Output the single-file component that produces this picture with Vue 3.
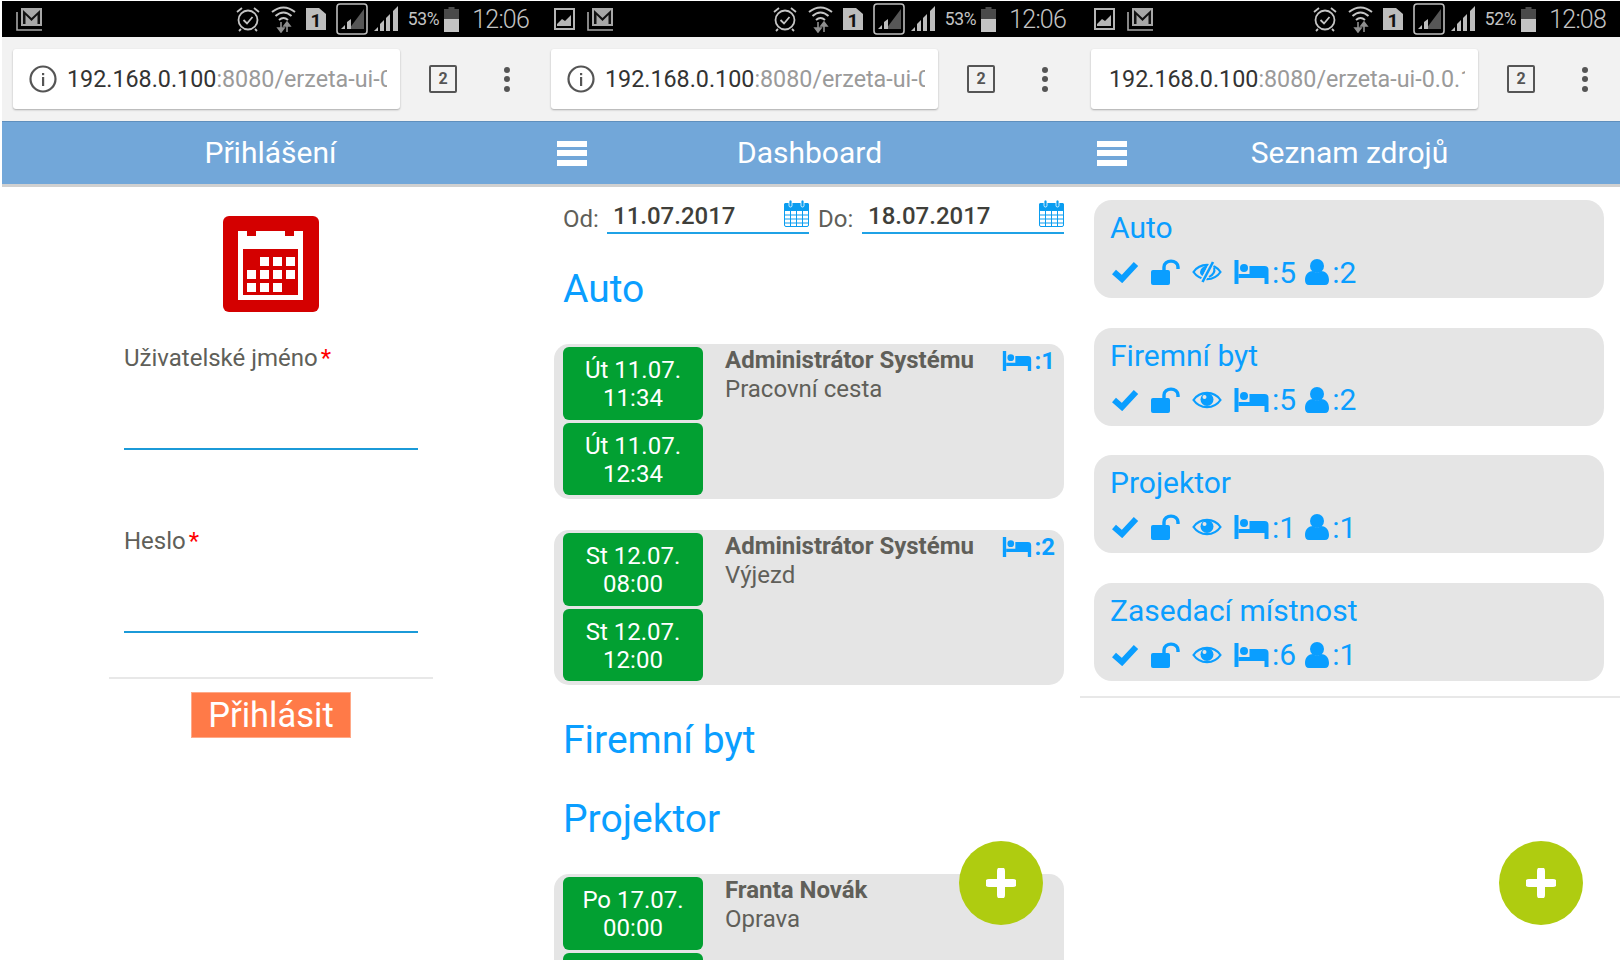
<template>
  <div class="screens">
    <svg class="defs" width="0" height="0">
      <symbol id="check" viewBox="0 0 28 22">
        <path d="M3 11 L11 18 L25 3" fill="none" stroke="currentColor" stroke-width="6" />
      </symbol>
      <symbol id="unlock" viewBox="0 0 29 26">
        <rect x="0" y="11" width="19" height="15" rx="2" fill="currentColor" />
        <path d="M13 12 V8 a6.5 5.5 0 0 1 14 0 V10" fill="none" stroke="currentColor" stroke-width="3.4" />
      </symbol>
      <symbol id="eye" viewBox="0 0 30 22">
        <path d="M1.5 11 C8 1.5 22 1.5 28.5 11 C22 20.5 8 20.5 1.5 11 Z" fill="none" stroke="currentColor" stroke-width="2.2" />
        <circle cx="15" cy="10.5" r="6.5" fill="currentColor" />
        <circle cx="12.5" cy="8" r="2" fill="#e5e5e5" />
      </symbol>
      <symbol id="eye-off" viewBox="0 0 30 22">
        <path d="M1.5 11 C8 1.5 22 1.5 28.5 11 C22 20.5 8 20.5 1.5 11 Z" fill="none" stroke="currentColor" stroke-width="2.2" />
        <path d="M8 11 Q9 5 16 4.5 L11 15 Q8 14 8 11 Z" fill="currentColor" />
        <path d="M22 7 Q24 12 17 16" fill="none" stroke="currentColor" stroke-width="2" />
        <path d="M21 0.5 L10 21.5" stroke="#e5e5e5" stroke-width="5" />
        <path d="M21 1 L10.5 21" stroke="currentColor" stroke-width="2.6" />
      </symbol>
      <symbol id="bed" viewBox="0 0 34 24">
        <rect x="0" y="0" width="4" height="24" fill="currentColor" />
        <circle cx="9.5" cy="8" r="4" fill="currentColor" />
        <path d="M15 6 H30 a4 4 0 0 1 4 4 V24 h-4 V18 H4 V14 H15 Z" fill="currentColor" />
      </symbol>
      <symbol id="user" viewBox="0 0 24 26">
        <circle cx="12" cy="7" r="7" fill="currentColor" />
        <path d="M0 21 C0 15 4 12 8 12 Q12 15.5 16 12 C20 12 24 15 24 21 Q24 26 20 26 H4 Q0 26 0 21 Z" fill="currentColor" />
      </symbol>
      <symbol id="calendar" viewBox="0 0 25 27">
        <rect x="0.5" y="3.5" width="24" height="23" rx="1.5" fill="#fff" stroke="currentColor" />
        <rect x="0" y="3" width="25" height="8" rx="1.5" fill="currentColor" />
        <rect x="5" y="0" width="3" height="7" rx="1.5" fill="currentColor" stroke="#fff" stroke-width="0.8" />
        <rect x="17" y="0" width="3" height="7" rx="1.5" fill="currentColor" stroke="#fff" stroke-width="0.8" />
        <path d="M6.5 11 V26 M12.5 11 V26 M18.5 11 V26 M1 15 H24 M1 19 H24 M1 23 H24" stroke="currentColor" stroke-width="1" />
      </symbol>
    </svg>

    <section v-for="phone in phones" :key="phone.id" class="phone" :class="phone.id">
      <div class="status">
        <svg v-if="phone.id !== 'login'" class="st-picture" viewBox="0 0 21 22" width="21" height="22">
          <rect x="1" y="1" width="19" height="20" fill="none" stroke="#b5b5b5" stroke-width="2" />
          <path d="M3 16 L8 11 L11 13 L17 7 V18 H3 Z" fill="#b5b5b5" />
        </svg>
        <svg class="st-mail" viewBox="0 0 27 24" width="27" height="24">
          <path d="M1 5 V23 H26" fill="none" stroke="#a8a8a8" stroke-width="1.6" />
          <rect x="5" y="1" width="21" height="18" fill="#a8a8a8" />
          <path d="M7 3 L15.5 11 L24 3 V17 H21.5 V8 L15.5 14 L9.5 8 V17 H7 Z" fill="#111" />
        </svg>
        <div class="st-right">
          <svg viewBox="0 0 24 26" width="24" height="26">
            <circle cx="12" cy="14" r="9.5" fill="none" stroke="#c4c4c4" stroke-width="1.8" />
            <path d="M7.5 14 L11 17.5 L16.5 11" fill="none" stroke="#c4c4c4" stroke-width="1.8" />
            <path d="M1 6 L6 2 M23 6 L18 2 M5 23 L3 25 M19 23 L21 25" stroke="#c4c4c4" stroke-width="1.8" />
          </svg>
          <svg class="gap-11" viewBox="0 0 25 28" width="25" height="28">
            <path d="M1 7 Q12.5 -2 24 7 M4.5 11 Q12.5 4 20.5 11 M8 15 Q12.5 11 17 15" fill="none" stroke="#c4c4c4" stroke-width="2" />
            <path d="M10 17 V26 M7 23 L10 27 L13 23 Z M16 18 V27 M13 21 L16 17 L19 21 Z" stroke="#8f8f8f" fill="#8f8f8f" stroke-width="1.6" />
          </svg>
          <svg class="gap-10" viewBox="0 0 20 22" width="20" height="22">
            <path d="M0 0 H13 L20 6 V22 H0 Z" fill="#bdbdbd" />
            <text x="4.5" y="19" class="sim-num">1</text>
          </svg>
          <svg class="gap-10" viewBox="0 0 32 32" width="32" height="32">
            <rect x="1" y="1" width="30" height="30" rx="3" fill="#000" stroke="#bdbdbd" stroke-width="1.6" />
            <path d="M13 26 L28 6 V26 Z" fill="#565656" />
            <path d="M5 26 L9 22 V26 Z M11 26 V19 L15 16 V26 Z" fill="#bdbdbd" />
          </svg>
          <svg class="gap-5" viewBox="0 0 26 26" width="26" height="26">
            <path d="M1 25 L5 21 V25 Z M7 25 V18 L11 14 V25 Z M13 25 V12 L17 8 V25 Z M20 25 V5 L25 0 V25 Z" fill="#bdbdbd" />
          </svg>
          <span class="st-pct">{{ phone.battery }}</span>
          <svg class="gap-5" viewBox="0 0 15 25" width="15" height="25">
            <path d="M4.5 0 H10.5 V2 H15 V25 H0 V2 H4.5 Z" fill="#4a4a4a" />
            <path d="M0 12 H15 V25 H0 Z" fill="#c4c4c4" />
          </svg>
          <span class="st-time">{{ phone.time }}</span>
        </div>
      </div>

      <div class="chrome">
        <div class="url">
          <svg v-if="phone.secureIcon" class="info" viewBox="0 0 28 28" width="28" height="28">
            <circle cx="14" cy="14" r="12.5" fill="none" stroke="#555" stroke-width="2.2" />
            <rect x="13" y="12" width="2.2" height="9" fill="#555" />
            <rect x="13" y="8" width="2.2" height="2.2" fill="#555" />
          </svg>
          <span class="url-text" :class="{ plain: !phone.secureIcon }"><span class="host">192.168.0.100</span>:8080/erzeta-ui-0.0.1-SNAPSHOT</span>
        </div>
        <div class="tabs">2</div>
        <div class="dots"><i></i><i></i><i></i></div>
      </div>

      <header class="bar">
        <div class="bar-left">
          <div v-if="phone.id !== 'login'" class="burger"><i></i><i></i><i></i></div>
        </div>
        <h1>{{ phone.title }}</h1>
        <div></div>
      </header>

      <main v-if="phone.id === 'login'" class="login">
        <svg class="logo" viewBox="0 0 96 96" width="96" height="96">
          <rect width="96" height="96" rx="6" fill="#d40000" />
          <path d="M15 15 H24 V20 H33 V15 H62 V20 H71 V15 H80 V84 H15 Z" fill="#fff" />
          <rect x="20" y="33" width="55" height="46" fill="#d40000" />
          <rect v-for="c in logoCells" :key="c.join()" :x="c[0]" :y="c[1]" width="9" height="9" fill="#fff" />
        </svg>
        <form class="form" @submit.prevent>
          <div class="form-fields">
            <label>Uživatelské jméno<b>*</b></label>
            <div class="line"></div>
            <label class="second">Heslo<b>*</b></label>
            <div class="line"></div>
          </div>
          <div class="form-foot">
            <button type="button">Přihlásit</button>
          </div>
        </form>
      </main>

      <main v-else-if="phone.id === 'dashboard'" class="dash">
        <div class="range">
          <template v-for="d in dates" :key="d.label">
            <span class="range-label">{{ d.label }}</span>
            <div class="range-field">
              <span>{{ d.value }}</span>
              <svg class="blue" width="25" height="27"><use href="#calendar" /></svg>
            </div>
          </template>
        </div>
        <template v-for="group in groups" :key="group.name">
          <h2>{{ group.name }}</h2>
          <article v-for="ev in group.events" :key="ev.from" class="event">
            <div class="times">
              <div class="time">{{ ev.from }}<br />{{ ev.fromTime }}</div>
              <div class="time">{{ ev.to }}<br />{{ ev.toTime }}</div>
            </div>
            <div class="info-col">
              <strong>{{ ev.who }}</strong>
              <span>{{ ev.what }}</span>
            </div>
            <div v-if="ev.beds" class="beds">
              <svg width="30" height="20"><use href="#bed" /></svg>:{{ ev.beds }}
            </div>
          </article>
        </template>
      </main>

      <main v-else class="list">
        <article v-for="res in resources" :key="res.name" class="res">
          <h3>{{ res.name }}</h3>
          <div class="res-row">
            <svg width="28" height="22"><use href="#check" /></svg>
            <svg width="29" height="26"><use href="#unlock" /></svg>
            <svg width="30" height="22"><use :href="res.hidden ? '#eye-off' : '#eye'" /></svg>
            <span class="stat">
              <svg width="35" height="24"><use href="#bed" /></svg>:{{ res.beds }}
            </span>
            <span class="stat">
              <svg width="24" height="26"><use href="#user" /></svg>:{{ res.people }}
            </span>
          </div>
        </article>
        <hr />
      </main>

      <button v-if="phone.id !== 'login'" class="fab" type="button">
        <svg viewBox="0 0 30 30" width="30" height="30">
          <path d="M15 3 V27 M3 15 H27" stroke="#fff" stroke-width="8" stroke-linecap="round" />
        </svg>
      </button>
    </section>
  </div>
</template>

<script setup>
const phones = [
  { id: 'login', title: 'Přihlášení', battery: '53%', time: '12:06', secureIcon: true },
  { id: 'dashboard', title: 'Dashboard', battery: '53%', time: '12:06', secureIcon: true },
  { id: 'list', title: 'Seznam zdrojů', battery: '52%', time: '12:08', secureIcon: false }
]

const logoCells = [
  [37, 41], [50, 41], [63, 41],
  [24, 54], [37, 54], [50, 54], [63, 54],
  [24, 67], [37, 67], [50, 67]
]

const dates = [
  { label: 'Od:', value: '11.07.2017' },
  { label: 'Do:', value: '18.07.2017' }
]

const groups = [
  {
    name: 'Auto',
    events: [
      { from: 'Út 11.07.', fromTime: '11:34', to: 'Út 11.07.', toTime: '12:34', who: 'Administrátor Systému', what: 'Pracovní cesta', beds: 1 },
      { from: 'St 12.07.', fromTime: '08:00', to: 'St 12.07.', toTime: '12:00', who: 'Administrátor Systému', what: 'Výjezd', beds: 2 }
    ]
  },
  { name: 'Firemní byt', events: [] },
  {
    name: 'Projektor',
    events: [
      { from: 'Po 17.07.', fromTime: '00:00', to: 'Po 17.07.', toTime: '12:00', who: 'Franta Novák', what: 'Oprava', beds: 0 }
    ]
  }
]

const resources = [
  { name: 'Auto', hidden: true, beds: 5, people: 2 },
  { name: 'Firemní byt', hidden: false, beds: 5, people: 2 },
  { name: 'Projektor', hidden: false, beds: 1, people: 1 },
  { name: 'Zasedací místnost', hidden: false, beds: 6, people: 1 }
]
</script>

<style>
html, body {
  margin: 0;
  background: #fff;
}
</style>

<style scoped>
.screens {
  display: grid;
  grid-template-columns: 538px 540px 540px;
  margin-left: 2px;
  height: 960px;
  overflow: hidden;
  font-family: Roboto, "Liberation Sans", sans-serif;
  color: #605f59;
}
.defs {
  position: absolute;
}
.phone {
  position: relative;
  height: 960px;
  overflow: hidden;
}

.status {
  display: flex;
  align-items: center;
  gap: 12px;
  height: 36px;
  margin-top: 1px;
  padding: 0 14px 0 14px;
  background: #000;
  color: #c4c4c4;
}
.phone.login .status {
  padding-right: 11px;
}
.st-right {
  display: flex;
  align-items: center;
  margin-left: auto;
}
.gap-11 { margin-left: 11px; }
.gap-10 { margin-left: 10px; }
.gap-5 { margin-left: 5px; }
.sim-num {
  font: 700 19px Roboto, sans-serif;
  fill: #111;
}
.st-pct {
  margin-left: 9px;
  font-size: 17.5px;
  letter-spacing: -0.3px;
}
.st-time {
  margin-left: 13px;
  font-size: 25px;
  font-weight: 300;
  letter-spacing: -0.8px;
}

.chrome {
  display: flex;
  align-items: center;
  height: 84px;
  background: #f2f2f2;
  padding: 0 22px 0 11px;
}
.url {
  display: flex;
  align-items: center;
  width: 387px;
  height: 60px;
  box-sizing: border-box;
  padding: 0 13px 0 16px;
  background: #fff;
  border-radius: 3px;
  box-shadow: 0 1px 2px rgba(0, 0, 0, 0.3);
}
.info {
  flex: none;
  margin-right: 10px;
}
.url-text {
  flex: 1;
  overflow: hidden;
  white-space: nowrap;
  font-size: 23.3px;
  color: #9a9a9a;
}
.url-text.plain {
  padding-left: 2px;
}
.host {
  color: #333;
}
.tabs {
  width: 28px;
  height: 28px;
  margin-left: 29px;
  box-sizing: border-box;
  border: 2.5px solid #555;
  border-radius: 2px;
  text-align: center;
  font-size: 16px;
  font-weight: 700;
  line-height: 23px;
  color: #555;
}
.dots {
  display: flex;
  flex-direction: column;
  gap: 3.5px;
  margin-left: 47px;
}
.dots i {
  width: 6px;
  height: 6px;
  border-radius: 50%;
  background: #555;
}

.bar {
  display: grid;
  grid-template-columns: 1fr auto 1fr;
  align-items: center;
  height: 66px;
  box-sizing: border-box;
  background: #72a7d9;
  border-top: 1px solid #5f8fbd;
  border-bottom: 3px solid #d0d0d0;
}
.bar h1 {
  margin: -2px 1px 0 0;
  font-size: 30px;
  font-weight: 400;
  color: #fff;
}
.bar-left {
  padding-left: 17px;
}
.burger {
  display: flex;
  flex-direction: column;
  gap: 3.5px;
  width: 30px;
}
.burger i {
  height: 6px;
  background: #fff;
}

main.login {
  display: flex;
  flex-direction: column;
  align-items: center;
  padding-top: 29px;
}
.form {
  width: 324px;
  margin-top: 31px;
}
.form-fields {
  padding: 0 15px 44px;
  border-bottom: 2px solid #e8e8e8;
}
.form label {
  display: block;
  height: 30px;
  font-size: 24px;
  line-height: 30px;
}
.form label b {
  margin-left: 3px;
  font-weight: 400;
  color: #f00;
}
.form label.second {
  margin-top: 76px;
}
.line {
  margin-top: 75px;
  height: 2px;
  background: #1b9ad8;
}
.form-foot {
  display: flex;
  justify-content: center;
  padding-top: 13px;
}
.form-foot button {
  width: 160px;
  height: 46px;
  padding: 0;
  border: 1px solid #ffa988;
  border-radius: 0;
  background: #ff7a48;
  color: #fff;
  font-family: inherit;
  font-size: 34.5px;
  line-height: 44px;
}

.range {
  display: flex;
  align-items: flex-end;
  margin-top: 13px;
  padding: 0 16px 0 23px;
}
.range-label {
  width: 44px;
  font-size: 24px;
  line-height: 30px;
}
.range-field {
  display: flex;
  align-items: flex-end;
  justify-content: space-between;
  width: 202px;
  height: 34px;
  margin-right: 9px;
  box-sizing: border-box;
  padding-left: 6px;
  border-bottom: 2px solid #1fa2e6;
  font-size: 24px;
  font-weight: 500;
  line-height: 28px;
  color: #3f3f3a;
}
.range-field span {
  margin-bottom: 2px;
}
.range-field:last-child {
  margin-right: 0;
}
.range-field .blue {
  margin-bottom: 5px;
  color: #0a9df0;
}
.dash h2 {
  margin: 31px 0 0 23px;
  font-size: 39px;
  font-weight: 400;
  line-height: 48px;
  color: #0a9eff;
}
.event {
  display: flex;
  margin: 31px 16px 0 14px;
  padding: 3px 9px 4px 9px;
  border-radius: 15px;
  background: #e5e5e5;
}
.times {
  display: flex;
  flex-direction: column;
  gap: 3px;
  flex: none;
}
.time {
  width: 140px;
  height: 72.5px;
  padding-top: 9px;
  box-sizing: border-box;
  border-radius: 6px;
  background: #02a032;
  color: #fff;
  font-size: 24px;
  line-height: 28px;
  text-align: center;
}
.info-col {
  flex: 1;
  display: flex;
  flex-direction: column;
  margin-left: 22px;
  margin-top: -1px;
  font-size: 24px;
  line-height: 29px;
}
.beds {
  display: flex;
  align-items: center;
  gap: 2px;
  height: 29px;
  margin-top: -1px;
  color: #0a9eff;
  font-size: 24px;
  font-weight: 700;
}

main.list {
  padding-top: 13px;
}
.res {
  height: 98px;
  margin: 0 16px 29.5px 14px;
  padding: 10px 0 0 17px;
  box-sizing: border-box;
  border-radius: 18px;
  background: #e5e5e5;
  color: #0a9eff;
}
.res h3 {
  margin: 0 0 0 -1px;
  font-size: 30px;
  font-weight: 400;
  line-height: 36px;
}
.res-row {
  display: flex;
  align-items: center;
  gap: 12px;
  height: 36px;
  margin-top: 8px;
  font-size: 30px;
}
.stat {
  display: flex;
  align-items: center;
  gap: 3px;
}
.stat + .stat {
  margin-left: -3px;
}
main.list hr {
  margin: -14.5px 0 0;
  border: 0;
  height: 2px;
  background: #e8e8e8;
}

.fab {
  position: absolute;
  right: 37px;
  top: 841px;
  display: flex;
  align-items: center;
  justify-content: center;
  width: 84px;
  height: 84px;
  padding: 0;
  border: 0;
  border-radius: 50%;
  background: #afcc10;
}
</style>
